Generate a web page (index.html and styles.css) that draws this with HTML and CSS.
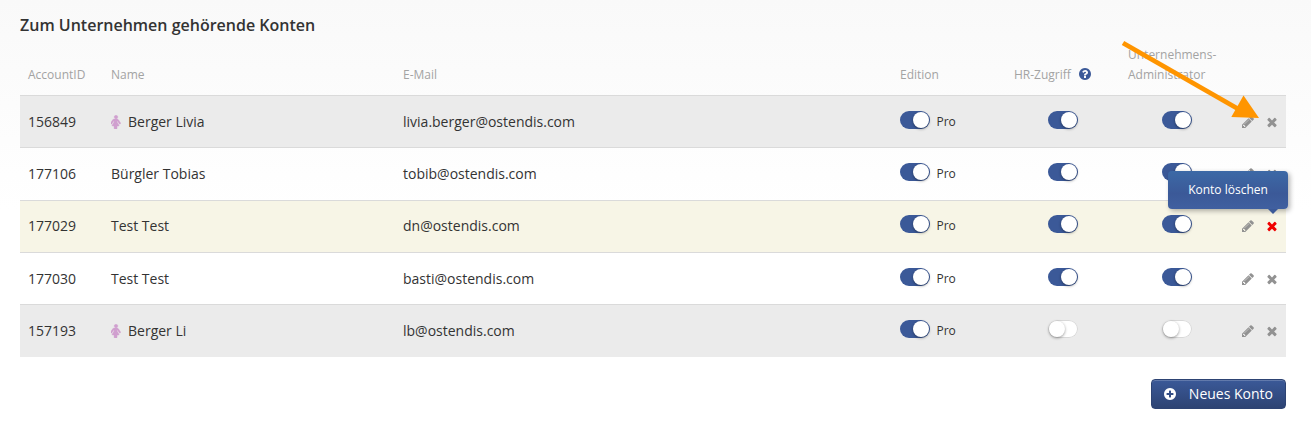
FILE: index.html
```html
<!DOCTYPE html>
<html lang="de">
<head>
    <meta charset="UTF-8">
    <meta name="viewport" content="width=device-width, initial-scale=1.0">
    <title>Konten</title>
    <link rel="stylesheet" href="styles.css">
</head>
<body>
    <svg class="symbols" width="0" height="0">
        <symbol id="icon-times" viewBox="0 0 1792 1792"><path d="M1490 1322q0 40-28 68l-136 136q-28 28-68 28t-68-28l-294-294-294 294q-28 28-68 28t-68-28l-136-136q-28-28-28-68t28-68l294-294-294-294q-28-28-28-68t28-68l136-136q28-28 68-28t68 28l294 294 294-294q28-28 68-28t68 28l136 136q28 28 28 68t-28 68l-294 294 294 294q28 28 28 68z"/></symbol>
        <symbol id="icon-pencil" viewBox="0 0 1792 1792"><path d="M491 1536l91-91-235-235-91 91v107h128v128h107zm523-928q0-22-22-22-10 0-17 7l-542 542q-7 7-7 17 0 22 22 22 10 0 17-7l542-542q7-7 7-17zm-54-192l416 416-832 832h-416v-416zm683 96q0 53-37 90l-166 166-416-416 166-165q36-38 90-38 53 0 91 38l235 234q37 39 37 91z"/></symbol>
        <symbol id="icon-plus" viewBox="0 0 1792 1792"><path d="M1344 960v-128q0-26-19-45t-45-19h-256v-256q0-26-19-45t-45-19h-128q-26 0-45 19t-19 45v256h-256q-26 0-45 19t-19 45v128q0 26 19 45t45 19h256v256q0 26 19 45t45 19h128q26 0 45-19t19-45v-256h256q26 0 45-19t19-45zm320-64q0 209-103 385.5t-279.5 279.5-385.5 103-385.5-103-279.5-279.5-103-385.5 103-385.5 279.5-279.5 385.5-103 385.5 103 279.5 279.5 103 385.5z"/></symbol>
        <symbol id="icon-question" viewBox="0 0 1792 1792"><path d="M1024 1376v-192q0-14-9-23t-23-9h-192q-14 0-23 9t-9 23v192q0 14 9 23t23 9h192q14 0 23-9t9-23zm256-672q0-88-55.5-163t-138.5-116-170-41q-243 0-371 213-15 24 8 42l132 100q7 6 19 6 16 0 25-12 53-68 86-92 34-24 86-24 48 0 85.5 26t37.5 59q0 38-20 61t-68 45q-63 28-115.5 86.5t-52.5 125.5v36q0 14 9 23t23 9h192q14 0 23-9t9-23q0-19 21.5-49.5t54.5-49.5q32-18 49-28.5t46-35 44.5-48 28-60.5 12.5-81zm384 192q0 209-103 385.5t-279.5 279.5-385.5 103-385.5-103-279.5-279.5-103-385.5 103-385.5 279.5-279.5 385.5-103 385.5 103 279.5 279.5 103 385.5z"/></symbol>
        <symbol id="icon-female" viewBox="256 0 1280 1792"><path d="M1480 1056q0 40-28 68t-68 28q-51 0-80-43l-227-341h-45v132l247 411q9 15 9 33 0 26-19 45t-45 19h-192v272q0 46-33 79t-79 33h-160q-46 0-79-33t-33-79v-272h-192q-26 0-45-19t-19-45q0-18 9-33l247-411v-132h-45l-227 341q-29 43-80 43-40 0-68-28t-28-68q0-29 16-53l256-384q73-107 176-107h384q103 0 176 107l256 384q16 24 16 53zm-360-800q0 93-65.5 158.5t-158.5 65.5-158.5-65.5-65.5-158.5 65.5-158.5 158.5-65.5 158.5 65.5 65.5 158.5z"/></symbol>
    </svg>

    <div class="accounts">
        <h1>Zum Unternehmen gehörende Konten</h1>

        <div class="row header">
            <div>AccountID</div>
            <div>Name</div>
            <div>E-Mail</div>
            <div>Edition</div>
            <div>HR-Zugriff <svg class="icon help"><use href="#icon-question"/></svg></div>
            <div>Unternehmens-Administrator</div>
            <div></div>
        </div>

        <div class="row gray">
            <div>156849</div>
            <div><svg class="female"><use href="#icon-female"/></svg>Berger Livia</div>
            <div>livia.berger@ostendis.com</div>
            <div class="edition"><span class="switch on"></span>Pro</div>
            <div class="access"><span class="switch on"></span></div>
            <div class="access"><span class="switch on"></span></div>
            <div class="actions">
                <svg class="icon"><use href="#icon-pencil"/></svg>
                <svg class="icon"><use href="#icon-times"/></svg>
            </div>
        </div>
        <div class="row">
            <div>177106</div>
            <div>Bürgler Tobias</div>
            <div>tobib@ostendis.com</div>
            <div class="edition"><span class="switch on"></span>Pro</div>
            <div class="access"><span class="switch on"></span></div>
            <div class="access"><span class="switch on"></span></div>
            <div class="actions">
                <svg class="icon"><use href="#icon-pencil"/></svg>
                <svg class="icon"><use href="#icon-times"/></svg>
            </div>
        </div>
        <div class="row active">
            <div>177029</div>
            <div>Test Test</div>
            <div>dn@ostendis.com</div>
            <div class="edition"><span class="switch on"></span>Pro</div>
            <div class="access"><span class="switch on"></span></div>
            <div class="access"><span class="switch on"></span></div>
            <div class="actions">
                <svg class="icon"><use href="#icon-pencil"/></svg>
                <svg class="icon delete"><use href="#icon-times"/></svg>
                <div class="tooltip">Konto löschen</div>
            </div>
        </div>
        <div class="row">
            <div>177030</div>
            <div>Test Test</div>
            <div>basti@ostendis.com</div>
            <div class="edition"><span class="switch on"></span>Pro</div>
            <div class="access"><span class="switch on"></span></div>
            <div class="access"><span class="switch on"></span></div>
            <div class="actions">
                <svg class="icon"><use href="#icon-pencil"/></svg>
                <svg class="icon"><use href="#icon-times"/></svg>
            </div>
        </div>
        <div class="row gray">
            <div>157193</div>
            <div><svg class="female"><use href="#icon-female"/></svg>Berger Li</div>
            <div>lb@ostendis.com</div>
            <div class="edition"><span class="switch on"></span>Pro</div>
            <div class="access"><span class="switch"></span></div>
            <div class="access"><span class="switch"></span></div>
            <div class="actions">
                <svg class="icon"><use href="#icon-pencil"/></svg>
                <svg class="icon"><use href="#icon-times"/></svg>
            </div>
        </div>

        <div class="footer">
            <button class="new-account"><svg class="icon"><use href="#icon-plus"/></svg>Neues Konto</button>
        </div>
    </div>

    <!-- arrow pointing to the delete icon -->
    <svg class="arrow" viewBox="0 0 140 80">
        <path d="M3 3L120 70" stroke="#ff9500" stroke-width="4.800"/>
        <path d="M123.500 55.500L139 78L111.300 77z" fill="#ff9500"/>
    </svg>
</body>
</html>
```
FILE: styles.css
```css
* {
    box-sizing: border-box;
}

body {
    margin: 0;
    height: 433px;
    overflow: hidden;
    font-family: "Open Sans", sans-serif;
    font-size: 14px;
    color: #333;
    background: #fff linear-gradient(#f9f9f9, #fff 210px) no-repeat;
}

.symbols {
    position: absolute;
}

.accounts {
    padding: 13px 25px 0 20px;
}

h1 {
    margin: 0;
    font-size: 16px;
    font-weight: 600;
    line-height: 24px;
}

.row {
    display: grid;
    grid-template-columns: 83px 292px 497px 114px 114px 114px 52px;
    align-items: center;
    height: 52.33px;
    border-top: 1px solid #dadada;
}

.row > div {
    padding-left: 8px;
}

.header {
    height: 58px;
    border-top: none;
    align-items: end;
    padding-bottom: 10px;
    font-size: 12px;
    line-height: 20px;
    color: #a3a3a3;
}

.gray {
    background-color: #ebebeb;
}

.active {
    padding-bottom: 1px;
    background-color: #f7f5e6;
}

.icon {
    width: 14px;
    height: 14px;
    fill: #929292;
}

.help {
    margin-left: 4px;
    fill: #3b5998;
    vertical-align: -2px;
}

.female {
    width: 10px;
    height: 14px;
    margin-right: 7px;
    fill: #d09fcf;
    stroke: #d09fcf;
    stroke-width: 50px;
    vertical-align: -2px;
}

.edition {
    display: flex;
    align-items: center;
    font-size: 12px;
}

.edition .switch {
    margin-right: 6.5px;
}

.row > .access {
    display: flex;
    justify-content: center;
    padding: 0;
}

.switch {
    display: flex;
    width: 30px;
    height: 18px;
    margin-bottom: 4px;
    padding: 1px;
    border-radius: 9px;
    background-color: #fff;
    box-shadow: inset 0 0 0 1px #d8d8d8;
}

.switch::before {
    content: "";
    width: 16px;
    height: 16px;
    border-radius: 50%;
    background-color: #fff;
    box-shadow: 0 1px 3px rgba(0, 0, 0, 0.4);
}

.switch.on {
    justify-content: flex-end;
    background-color: #3b5998;
    box-shadow: none;
}

.actions {
    position: relative;
    display: flex;
    gap: 10px;
}

.row > .actions {
    padding: 1px 0 0 7px;
}

.actions .delete {
    fill: #f00000;
}

.tooltip {
    position: absolute;
    right: -2px;
    bottom: 24.5px;
    width: 120px;
    height: 38px;
    border-radius: 4px;
    background: linear-gradient(#3c69a6, #3b5998 60%, #4060a0);
    box-shadow: 2px 2px 5px rgba(0, 0, 0, 0.3);
    color: #fff;
    font-size: 12px;
    line-height: 37px;
    text-align: center;
}

.tooltip::after {
    content: "";
    position: absolute;
    top: 38px;
    right: 10px;
    border: 5px solid transparent;
    border-top-color: #3b5998;
    border-bottom: none;
}

.footer {
    display: flex;
    justify-content: flex-end;
    margin-top: 22px;
}

.new-account {
    display: flex;
    align-items: center;
    justify-content: space-between;
    width: 135px;
    height: 30px;
    padding: 0 12px 0 11px;
    border: 1px solid #2d4373;
    border-radius: 4px;
    background: linear-gradient(#3b5998, #2d4373);
    box-shadow: inset 0 1px 0 rgba(255, 255, 255, 0.2);
    color: #fff;
    font-family: inherit;
    font-size: 14px;
}

.new-account .icon {
    fill: #fff;
}

.arrow {
    position: absolute;
    left: 1120px;
    top: 40px;
    width: 140px;
    height: 80px;
}
```
